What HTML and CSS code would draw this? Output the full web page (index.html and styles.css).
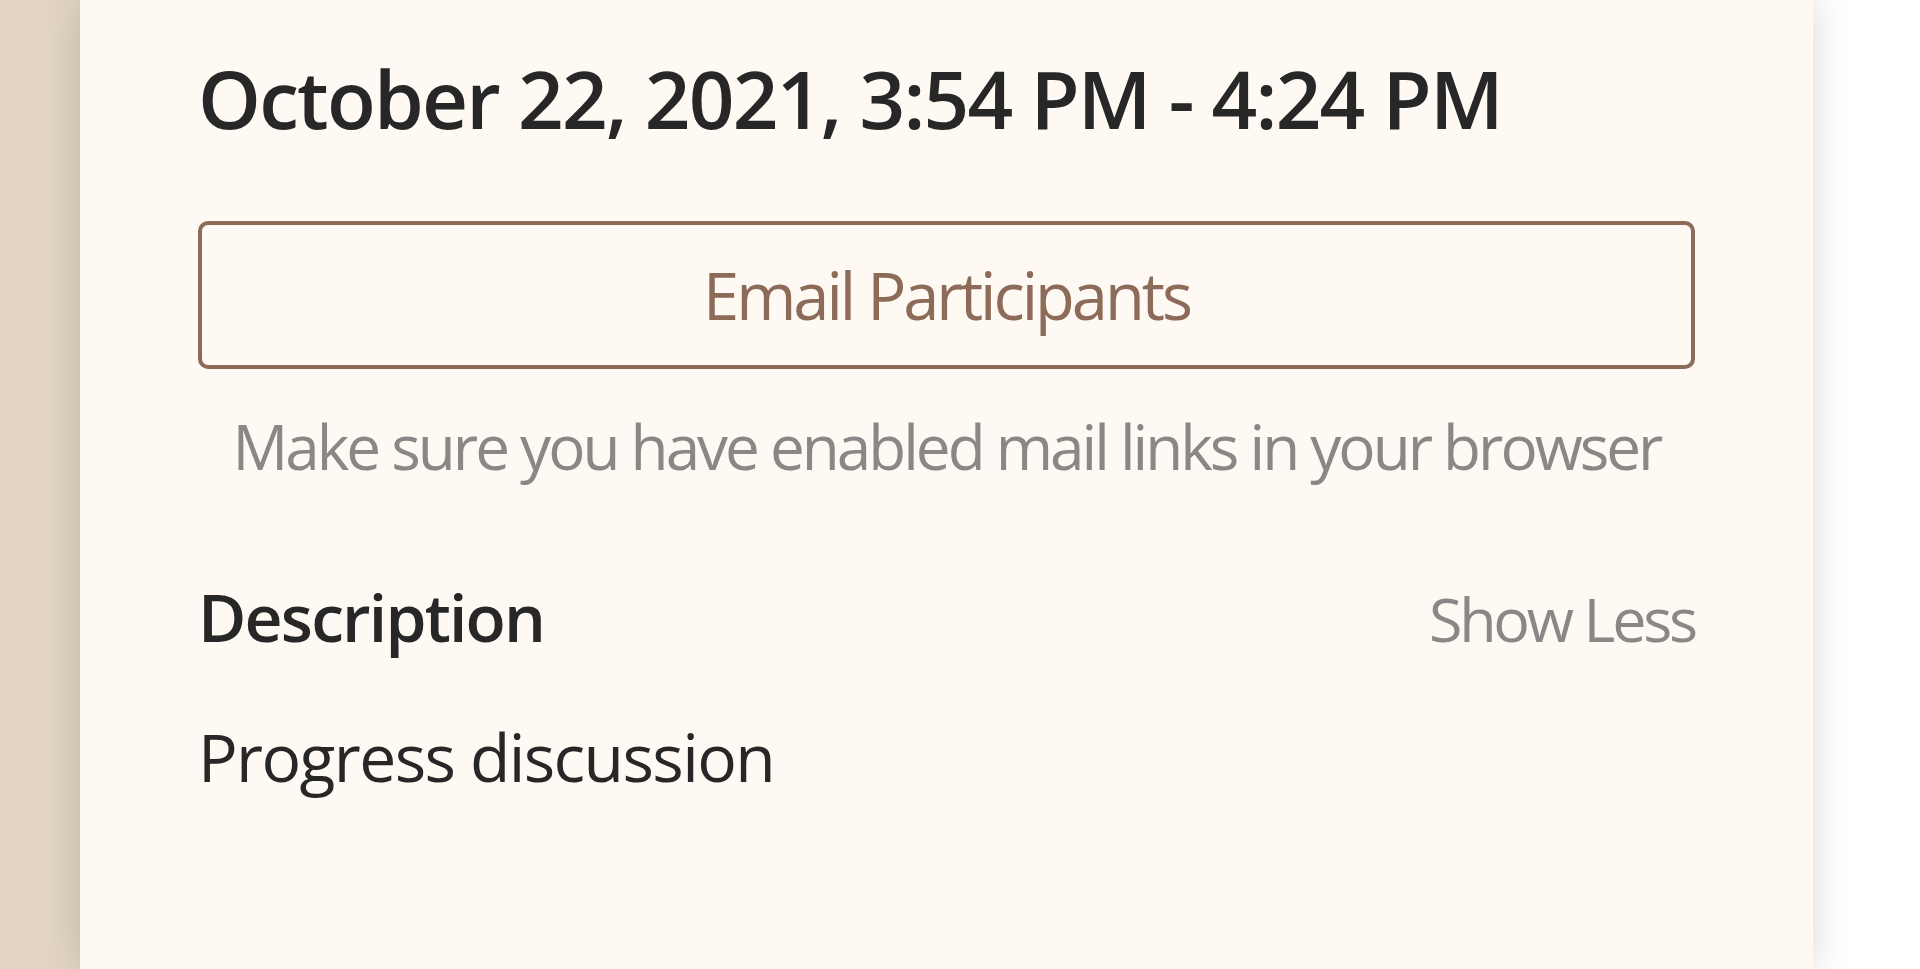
FILE: index.html
```html
<!DOCTYPE html>
<html lang="en">
<head>
<meta charset="utf-8">
<title>Meeting details</title>
<link rel="stylesheet" href="styles.css">
</head>
<body>
<div class="page">
  <div class="backdrop"></div>
  <aside class="panel">
    <h1 class="when">October 22, 2021, 3:54 PM - 4:24 PM</h1>
    <button class="email-btn" type="button">Email Participants</button>
    <p class="hint">Make sure you have enabled mail links in your browser</p>
    <div class="desc-head">
      <h2 class="desc-title">Description</h2>
      <span class="toggle">Show Less</span>
    </div>
    <p class="desc-body">Progress discussion</p>
  </aside>
  <div class="side"></div>
</div>
</body>
</html>
```

FILE: styles.css
```css
html, body {
  margin: 0;
  padding: 0;
  height: 100%;
  background: #ffffff;
  font-family: "Open Sans", "Noto Sans", sans-serif;
}

.page {
  display: flex;
  height: 969px;
  overflow: hidden;
}

.backdrop {
  width: 80px;
  flex: 0 0 80px;
  background: #e2d5c3;
}

.panel {
  flex: 0 0 1733px;
  box-sizing: border-box;
  padding: 48px 118px 0 118px;
  background: #fff9f4;
  box-shadow: 0 0 38px rgba(0, 0, 0, 0.16);
  display: flex;
  flex-direction: column;
}

.side {
  flex: 1;
}

.when {
  margin: 0;
  font-size: 80px;
  line-height: 100px;
  font-weight: 600;
  color: #272727;
  white-space: nowrap;
  letter-spacing: -1.8px;
}

.email-btn {
  margin-top: 73px;
  height: 148px;
  box-sizing: border-box;
  border: 4px solid #8c6b58;
  border-radius: 10px;
  background: transparent;
  display: flex;
  align-items: center;
  justify-content: center;
  font-family: inherit;
  font-size: 65px;
  line-height: 100px;
  color: #8c6b58;
  padding: 0;
  letter-spacing: -3px;
}

.hint {
  margin: 32px 0 0 0;
  text-align: center;
  white-space: nowrap;
  font-size: 62px;
  line-height: 90px;
  color: #8a8886;
  letter-spacing: -3px;
}

.desc-head {
  margin-top: 75px;
  display: flex;
  justify-content: space-between;
  align-items: baseline;
}

.desc-title {
  margin: 0;
  font-size: 66px;
  line-height: 100px;
  font-weight: 600;
  color: #272727;
  letter-spacing: -1.8px;
}

.toggle {
  font-size: 61px;
  line-height: 100px;
  color: #8a8886;
  letter-spacing: -3.2px;
}

.desc-body {
  margin: 37px 0 0 0;
  font-size: 66px;
  line-height: 100px;
  color: #272727;
  letter-spacing: -1.6px;
}
```
